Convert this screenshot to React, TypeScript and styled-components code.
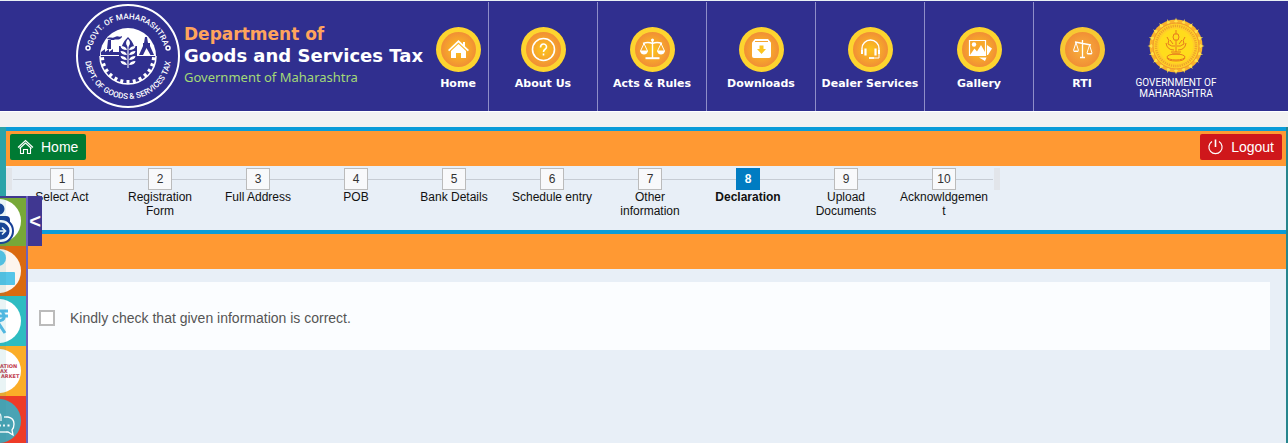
import React from "react";
import styled, { createGlobalStyle, css } from "styled-components";

const GlobalStyle = createGlobalStyle`
  *, *::before, *::after { box-sizing: border-box; }
  html, body { min-height: 100%; }
  body {
    margin: 0;
    background: #e8eff7;
    font-family: "Liberation Sans", Arial, sans-serif;
    color: #111;
  }
  #root { min-height: 100vh; display: flex; flex-direction: column; }
`;

const Header = styled.header`
  display: flex;
  height: 112px;
  padding-left: 76px;
  background: #302f8f;
  border-top: 1px solid #e8f0f4;
  border-bottom: 1px solid #fff;
  font-family: "DejaVu Sans", Verdana, sans-serif;
`;

const Brand = styled.a`
  display: flex;
  flex: none;
  width: 352px;
  gap: 4px;
  padding-top: 3px;
  text-decoration: none;
`;

const BrandText = styled.div`
  padding-top: 19px;
  white-space: nowrap;
`;

const BrandLine = styled.div<{ $color: string; $size: number }>`
  color: ${(p) => p.$color};
  font-size: ${(p) => p.$size}px;
  font-weight: bold;
  line-height: 22px;
`;

const BrandSub = styled.div`
  color: #a3d977;
  font-family: "Noto Sans", sans-serif;
  font-size: 13px;
  line-height: 20px;
`;

const Nav = styled.nav`
  display: flex;
`;

const NavLink = styled.a<{ $width: number; $last?: boolean }>`
  display: flex;
  flex-direction: column;
  align-items: center;
  gap: 3px;
  width: ${(p) => p.$width}px;
  margin-top: 1px;
  padding-top: 25px;
  border-right: ${(p) => (p.$last ? "none" : "1px solid #8e8ec8")};
  color: #fff;
  font-size: 11px;
  font-weight: bold;
  line-height: 18px;
  text-decoration: none;
  white-space: nowrap;
`;

const Emblem = styled.div`
  display: flex;
  flex-direction: column;
  align-items: center;
  width: 92px;
  padding-top: 15px;
  color: #fff;
  font-family: Roboto, sans-serif;
  font-size: 10px;
  line-height: 11px;
  text-align: center;
`;

const EmblemText = styled.div`
  padding-top: 1px;
`;

const Gap = styled.div`
  height: 15px;
  background: #f2f2f2;
`;

const Frame = styled.div`
  flex: 1;
  display: flex;
  padding: 0 2px 0 6px;
  background: linear-gradient(90deg, #2ba3a8, #27868e);
`;

const Main = styled.main`
  flex: 1;
  min-width: 0;
  background: #e8eff7;
`;

const Bar = styled.div`
  display: flex;
  align-items: center;
  justify-content: space-between;
  height: 39px;
  padding: 0 4px 3px;
  background: #ff9933;
  border-top: 4px solid #0a9cd8;
`;

const BarButton = styled.button<{ $color: string }>`
  display: flex;
  align-items: center;
  gap: 7px;
  height: 26px;
  padding: 0 8px 0 7px;
  border: 0;
  border-radius: 2px;
  background: ${(p) => p.$color};
  color: #fff;
  font: 14px/26px "Liberation Sans", Arial, sans-serif;
`;

const Steps = styled.ol`
  display: flex;
  width: 994px;
  height: 64px;
  margin: 0;
  padding: 2px 7px 0;
  list-style: none;
  background:
    linear-gradient(#e2e5ea, #e2e5ea) 0 2px / 6px 22px no-repeat,
    linear-gradient(#e2e5ea, #e2e5ea) 100% 2px / 6px 22px no-repeat;
`;

const Step = styled.li<{ $active?: boolean }>`
  display: flex;
  flex-direction: column;
  align-items: center;
  width: 98px;
  background: linear-gradient(#c6ccd4, #c6ccd4) 0 11px / 100% 1px no-repeat;
  font-size: 12px;
  line-height: 14px;
  text-align: center;
  font-weight: ${(p) => (p.$active ? "bold" : "normal")};
`;

const StepNumber = styled.span<{ $active?: boolean }>`
  width: 24px;
  height: 22px;
  border: 1px solid #bbb;
  background: #f8f9fb;
  color: #333;
  line-height: 20px;
  ${(p) =>
    p.$active &&
    css`
      border-color: #007cc2;
      background: #007cc2;
      color: #fff;
    `}
`;

const StepLabel = styled.span`
  width: 90px;
  overflow-wrap: anywhere;
`;

const Card = styled.section`
  margin: 13px 16px 0 22px;
  padding: 28px 11px 24px;
  background: #fbfdff;
`;

const CheckLabel = styled.label`
  display: flex;
  align-items: center;
  gap: 15px;
  color: #555;
  font-size: 14px;
  line-height: 16px;
`;

const Check = styled.input`
  appearance: none;
  width: 16px;
  height: 16px;
  margin: 0;
  border: 2px solid #bbb;
  background: #fff;
`;

const Side = styled.aside`
  position: fixed;
  top: 196px;
  bottom: 0;
  left: 0;
  display: flex;
  align-items: flex-start;
  overflow: hidden;
`;

const SideTiles = styled.div`
  display: flex;
  flex-direction: column;
  width: 28px;
  border-right: 2px solid #6c63bd;
`;

const Tile = styled.a<{ $color: string }>`
  display: block;
  height: 50px;
  background: ${(p) => p.$color};
  &:first-child { box-shadow: inset 0 2px #403791; }
  svg { display: block; }
`;

const SideToggle = styled.button`
  width: 14px;
  height: 50px;
  padding: 0;
  border: 0;
  background: #403791;
  color: #fff;
  font: bold 20px/50px "Liberation Sans", Arial, sans-serif;
`;

function Seal() {
  const teeth = Array.from({ length: 13 }, (_, i) => 6 + i * 14);
  return (
    <svg width="104" height="104" viewBox="0 0 104 104" aria-hidden="true">
      <defs>
        <path id="sealTop" d="M15 52A37 37 0 0 1 89 52" />
        <path id="sealBottom" d="M9 52A43 43 0 0 0 95 52" />
      </defs>
      <circle cx="52" cy="52" r="51" fill="none" stroke="#fff" strokeWidth="2" />
      <g fill="#fff" fontFamily="Roboto, sans-serif" fontSize="8" fontWeight="500" textAnchor="middle">
        <text><textPath href="#sealTop" startOffset="50%">GOVT. OF MAHARASHTRA</textPath></text>
        <text><textPath href="#sealBottom" startOffset="50%">DEPT. OF GOODS &amp; SERVICES TAX</textPath></text>
      </g>
      <circle cx="12" cy="44" r="2" fill="none" stroke="#fff" strokeWidth="1.500" />
      <circle cx="92" cy="44" r="2" fill="none" stroke="#fff" strokeWidth="1.500" />
      <path d="M24 52A28 28 0 0 1 80 52Z" fill="#fff" />
      <path d="M24 52A28 28 0 0 0 80 52" fill="none" stroke="#fff" strokeWidth="1.500" />
      <g stroke="#fff" strokeWidth="3">
        {teeth.map((a) => (
          <path key={a} d="M80 52H76" transform={`rotate(${a} 52 52)`} />
        ))}
      </g>
      <g fill="#302f8f">
        <path d="M25 51V48L29 45V48L33 45V48L37 45V48H43V51ZM31 45L32 36H35V45ZM31 35C33 32 36 35 39 33C42 31 43 34 46 32C46 35 42 36 39 35.500C36 37 34 35 31 35Z" />
        <path d="M69 33H71L72 39H74V42L78 51H74.500L70.500 44L67 51H63L67 42V39H68Z" />
        <path d="M52 33C56 37 57 39 58 42H61V57Q59 62 52 63Q45 62 43 57V42H46C47 39 48 37 52 33Z" />
      </g>
      <g fill="#fff">
        <path d="M52 35C55 38 54 41 52 43C50 41 49 38 52 35Z" />
        {[42, 47, 52, 57].map((y) => (
          <path key={y} d={`M51 ${y + 4}Q45 ${y + 4} 44.500 ${y}Q50 ${y} 51 ${y + 4}ZM53 ${y + 4}Q59 ${y + 4} 59.500 ${y}Q54 ${y} 53 ${y + 4}Z`} />
        ))}
        <path d="M51.500 41H52.500V64H51.500Z" />
      </g>
    </svg>
  );
}

const glyphs: Record<string, React.ReactNode> = {
  home: (
    <g>
      <path d="M12 23L22.500 13L27 17.200V15H29V19.200L33 23L31.800 24.300L22.500 15.500L13.200 24.300Z" fill="#fff" />
      <path d="M15 24L22.500 17L30 24V31H25V26H20V31H15Z" fill="#fff" />
    </g>
  ),
  about: (
    <g fill="none" stroke="#fff" strokeWidth="1.600">
      <circle cx="22.500" cy="22.500" r="11" />
      <path d="M19.500 20.500C19.500 16 25.500 16 25.500 20C25.500 22.500 22.500 22 22.500 25" />
      <path d="M22.500 26.500V28.500" />
    </g>
  ),
  scales: (
    <g fill="none" stroke="#fff" strokeWidth="1.400">
      <path d="M22.500 13V31M13 16.500Q18 14.500 22.500 16.500Q27 14.500 32 16.500" />
      <path d="M14 16.500L10.500 24H17.500ZM31 16.500L27.500 24H34.500Z" strokeWidth="1" />
      <path d="M10 24H18Q17 27.500 14 27.500Q11 27.500 10 24ZM27 24H35Q34 27.500 31 27.500Q28 27.500 27 24Z" fill="#fff" stroke="none" />
      <path d="M15.500 31.200H29.500" strokeWidth="2" />
      <circle cx="22.500" cy="13" r="1.500" fill="#fff" stroke="none" />
    </g>
  ),
  downloads: (
    <g>
      <path d="M13 15.500L16 12H29L32 15.500V29Q32 31 30 31H15Q13 31 13 29Z" fill="#fff" />
      <path d="M16 14.500H29" stroke="#f5a52f" />
      <path d="M20.500 18.500H24.500V22H27L22.500 27L18 22H20.500Z" fill="#fcc51f" />
    </g>
  ),
  dealer: (
    <g fill="none" stroke="#fff">
      <path d="M14 24V21.500A8.500 8.500 0 0 1 31 21.500V24" strokeWidth="1.400" />
      <path d="M17.500 21.500V28.500M27.500 21.500V28.500" strokeWidth="2.200" />
      <path d="M14 23V27M31 23V27" strokeWidth="2" />
      <path d="M31 27V31H26" strokeWidth="1" />
      <path d="M21 31H26" strokeWidth="1.800" />
    </g>
  ),
  gallery: (
    <g>
      <path d="M30 18L35 21.500L31 28H30ZM22 30.500H29.500L28 34Z" fill="#fff" />
      <path d="M12.500 13.500H28.500V28.500H12.500Z" fill="#f8a92b" stroke="#fff" strokeWidth="1.200" />
      <path d="M13 28L17.500 21.500L20 24.500L24 18L28 25V28Z" fill="#fff" />
      <circle cx="17" cy="17.500" r="2.200" fill="#fff" />
    </g>
  ),
  rti: (
    <g fill="none" stroke="#fff" strokeWidth="1.300">
      <path d="M22.500 13V31M15 15L31 18M20 30.500H25" />
      <path d="M16 15.500L13.500 23.500M16 15.500L18.500 23.500M29.500 18L27 26M29.500 18L32 26" strokeWidth="1" />
      <path d="M13 23.500H19L18 25H14ZM26.500 26H32.500L31.500 27.500H27.500Z" fill="#fff" stroke="none" />
    </g>
  ),
};

function Coin({ name }: { name: string }) {
  return (
    <svg width="45" height="45" viewBox="0 0 45 45" aria-hidden="true">
      <defs>
        <radialGradient id={`coin-${name}`}>
          <stop offset="0" stopColor={name === "rti" ? "#f8b23d" : "#fdc51d"} />
          <stop offset="1" stopColor="#f18f35" />
        </radialGradient>
      </defs>
      <circle cx="22.500" cy="22.500" r="22.500" fill={name === "rti" ? "#f7c833" : "#fdd42f"} />
      <circle cx="22.500" cy="22.500" r="17.500" fill={`url(#coin-${name})`} />
      {glyphs[name]}
    </svg>
  );
}

function StateEmblem() {
  const petals = Array.from({ length: 20 }, (_, i) => i * 18);
  return (
    <svg width="58" height="60" viewBox="0 0 58 60" role="img" aria-label="Government of Maharashtra emblem">
      <circle cx="29" cy="30" r="26.500" fill="#f9b32c" />
      <g fill="#ffe04a">
        {petals.map((a) => (
          <path key={a} d="M27 5.500Q28.500 4.500 29 1.500Q29.500 4.500 31 5.500L29 7.500Z" transform={`rotate(${a} 29 30)`} />
        ))}
      </g>
      <circle cx="29" cy="30" r="23" fill="#ffcf28" stroke="#f0982c" />
      <circle cx="29" cy="30" r="20" fill="none" stroke="#eda22c" strokeWidth="2.500" strokeDasharray="1.200 1" />
      <circle cx="29" cy="30" r="17" fill="#ffdc1c" />
      <g fill="none" stroke="#e67a1e">
        <path d="M29 14V18M27 18H31L32 21L31 24H27L26 21ZM29 24V36M20 21Q23 24 21 28Q25 31 28 30M38 21Q35 24 37 28Q33 31 30 30M19 27Q20 34 27 34M39 27Q38 34 31 34M23 24L26 28M35 24L32 28M24 36H34M25 38H33" />
        <ellipse cx="29" cy="41" rx="9" ry="3" />
        <path d="M20 42Q21 45 29 45Q37 45 38 42" />
      </g>
    </svg>
  );
}

const HomeIcon = () => (
  <svg width="17" height="16" viewBox="0 0 17 16" fill="none" stroke="#fff" strokeWidth="1.100" aria-hidden="true">
    <path d="M1 8.500L8.500 1.500L16 8.500M2.500 9.500L8.500 4L14.500 9.500" />
    <path d="M3.500 9V14.500H6.500V10.500H10.500V14.500H13.500V9" />
  </svg>
);

const PowerIcon = () => (
  <svg width="17" height="16" viewBox="0 0 17 16" fill="none" stroke="#fff" strokeWidth="1.200" aria-hidden="true">
    <path d="M5 2.500A6.600 6.600 0 1 0 12 2.500" />
    <path d="M8.500 0.500V8" strokeWidth="1.600" />
  </svg>
);

const tiles = [
  {
    label: "Accessibility",
    color: "#77a838",
    disc: "#fff",
    art: (
      <g>
        <circle cx="-1" cy="13" r="5.500" fill="#173f96" />
        <path d="M-4 20H6Q10 20 10 24V29H-4Z" fill="#173f96" />
        <circle cx="1" cy="35" r="12" fill="#fff" stroke="#173f96" strokeWidth="2" />
        <circle cx="1" cy="35" r="8.500" fill="#173f96" />
        <path d="M-3 35H5M2 31.500L5.500 35L2 38.500" fill="none" stroke="#fff" strokeWidth="1.600" />
      </g>
    ),
  },
  {
    label: "Profile",
    color: "#da6a10",
    disc: "#fdf5ee",
    art: (
      <g fill="#56c5e8">
        <circle cx="-2" cy="12" r="8" />
        <rect x="-8" y="26" width="23" height="13" rx="1" />
      </g>
    ),
  },
  {
    label: "Payments",
    color: "#2ebcc1",
    disc: "#fff",
    art: (
      <path d="M-4 15H8M-4 20H8M2 15Q8 25 -3 25L5 37" fill="none" stroke="#56bce8" strokeWidth="3" />
    ),
  },
  {
    label: "Tax market",
    color: "#fbad28",
    disc: "#fff",
    art: (
      <g fill="#c23a4c" fontFamily="DejaVu Sans, sans-serif" fontWeight="bold" fontSize="5">
        <text x="0" y="22">ATION</text>
        <text x="0" y="27">AX</text>
        <text x="1" y="32">ARKET</text>
      </g>
    ),
  },
  {
    label: "Chat",
    color: "#ee3b27",
    disc: "#4aa3b4",
    art: (
      <g fill="none" stroke="#fff" strokeWidth="1.300">
        <path d="M-4 16Q1 17 1 21V25M4 21H8Q14 22 14 28Q14 32 12 34L13 39L8 36H0Q-4 36 -4 30" />
        <path d="M-1 29.500H1M3 29.500H5M7.500 29.500H9.500" strokeWidth="2" />
      </g>
    ),
  },
];

const navItems = [
  { label: "Home", icon: "home", width: 61 },
  { label: "About Us", icon: "about", width: 109 },
  { label: "Acts & Rules", icon: "scales", width: 109 },
  { label: "Downloads", icon: "downloads", width: 109 },
  { label: "Dealer Services", icon: "dealer", width: 109 },
  { label: "Gallery", icon: "gallery", width: 109 },
  { label: "RTI", icon: "rti", width: 96 },
];

const steps = [
  "Select Act",
  "Registration Form",
  "Full Address",
  "POB",
  "Bank Details",
  "Schedule entry",
  "Other information",
  "Declaration",
  "Upload Documents",
  "Acknowldgement",
];

export default function App() {
  return (
    <>
      <GlobalStyle />
      <Header>
        <Brand href="#">
          <Seal />
          <BrandText>
            <BrandLine $color="#ffa45c" $size={17}>Department of</BrandLine>
            <BrandLine $color="#fff" $size={18}>Goods and Services Tax</BrandLine>
            <BrandSub>Government of Maharashtra</BrandSub>
          </BrandText>
        </Brand>
        <Nav>
          {navItems.map((item, i) => (
            <NavLink key={item.label} href="#" $width={item.width} $last={i === navItems.length - 1}>
              <Coin name={item.icon} />
              {item.label}
            </NavLink>
          ))}
        </Nav>
        <Emblem>
          <StateEmblem />
          <EmblemText>GOVERNMENT OF MAHARASHTRA</EmblemText>
        </Emblem>
      </Header>
      <Gap />
      <Frame>
        <Main>
          <Bar>
            <BarButton type="button" $color="#007a33"><HomeIcon />Home</BarButton>
            <BarButton type="button" $color="#cf171b"><PowerIcon />Logout</BarButton>
          </Bar>
          <Steps>
            {steps.map((label, i) => (
              <Step key={label} $active={i === 7}>
                <StepNumber $active={i === 7}>{i + 1}</StepNumber>
                <StepLabel>{label}</StepLabel>
              </Step>
            ))}
          </Steps>
          <Bar />
          <Card>
            <CheckLabel>
              <Check type="checkbox" />
              Kindly check that given information is correct.
            </CheckLabel>
          </Card>
        </Main>
      </Frame>
      <Side>
        <SideTiles>
          {tiles.map((t) => (
            <Tile key={t.label} href="#" $color={t.color} aria-label={t.label}>
              <svg width="26" height="50" viewBox="0 0 26 50" aria-hidden="true">
                <circle cx="-1" cy="25" r="22" fill={t.disc} />
                {t.art}
                <path d="M0 0H6V50H0Z" fill="#2a8f9a" opacity="0.100" />
              </svg>
            </Tile>
          ))}
        </SideTiles>
        <SideToggle type="button" aria-label="Collapse panel">&lt;</SideToggle>
      </Side>
    </>
  );
}
